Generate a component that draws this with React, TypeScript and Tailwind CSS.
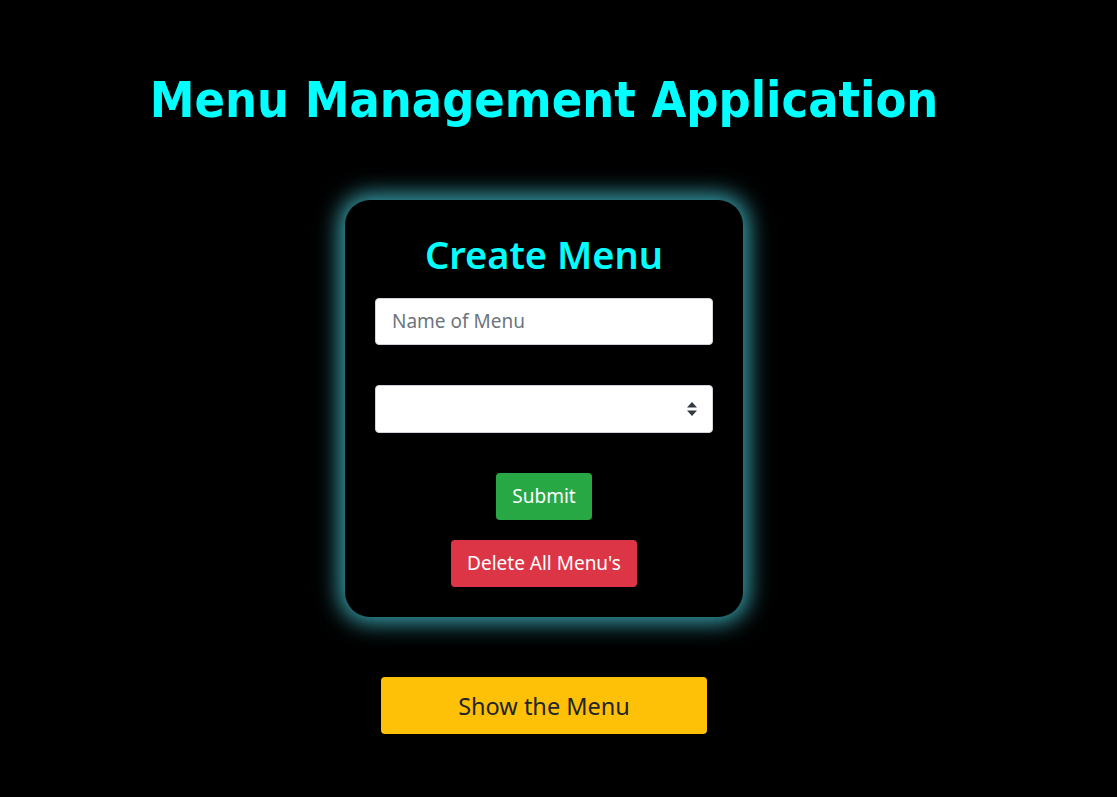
import { useState } from 'react';

function SelectArrows() {
  return (
    <svg viewBox="0 0 10 14" className="h-[14px] w-[10px]" fill="#343a40">
      <path d="M5 0 L10 5.5 H0 Z" />
      <path d="M5 14 L0 8.5 H10 Z" />
    </svg>
  );
}

export default function App() {
  const [name, setName] = useState('');

  return (
    <div className="min-h-screen bg-black font-['Noto_Sans',sans-serif]">
      <div className="flex w-[1088px] flex-col items-center">
        <h1 className="mt-[70px] font-['DejaVu_Sans_Condensed','DejaVu_Sans',sans-serif] text-[50px] leading-[1.2] font-bold text-[#00ffff]">
          Menu Management Application
        </h1>

        {/* Card */}
        <div className="mt-[70px] flex w-[398px] flex-col items-center rounded-[25px] bg-black px-[30px] pt-[32px] pb-[30px] shadow-[0_0_22px_6px_rgba(70,200,215,0.8)]">
          <h2 className="text-[38px] leading-[1.2] font-semibold text-[#00ffff]">Create Menu</h2>

          <input
            value={name}
            onChange={(e) => setName(e.target.value)}
            placeholder="Name of Menu"
            className="mt-[20px] h-[47px] w-full rounded-[4px] border border-[#ced4da] bg-white px-4 text-[19px] text-[#495057] outline-none placeholder:text-[#6c757d]"
          />

          <div className="mt-[40px] flex h-[48px] w-full items-center justify-end rounded-[4px] border border-[#ced4da] bg-white pr-[15px]">
            <SelectArrows />
          </div>

          <button className="mt-[40px] h-[47px] rounded-[4px] bg-[#28a745] px-4 pt-[1px] text-[19px] text-white">
            Submit
          </button>
          <button className="mt-[20px] h-[47px] rounded-[4px] bg-[#dc3545] px-4 pt-[1px] text-[19px] text-white">
            Delete All Menu's
          </button>
        </div>

        <button className="mt-[60px] h-[57px] w-[326px] rounded-[4px] bg-[#ffc107] pt-[3px] text-[23.5px] text-[#212529]">
          Show the Menu
        </button>
      </div>
    </div>
  );
}
